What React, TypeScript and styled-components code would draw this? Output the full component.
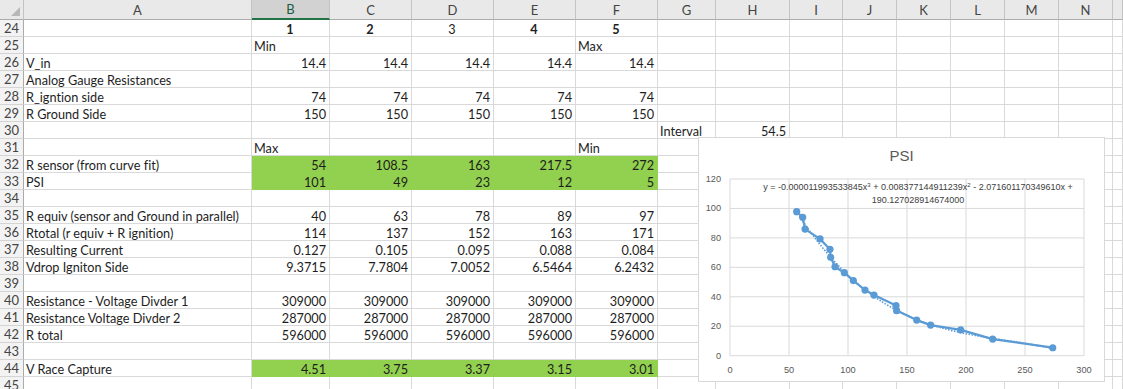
import React from 'react';
import styled, { createGlobalStyle } from 'styled-components';

const GlobalStyle = createGlobalStyle`
  html, body {
    margin: 0;
    padding: 0;
    background: #ffffff;
    overflow: hidden;
  }
`;

const COLS = ['A', 'B', 'C', 'D', 'E', 'F', 'G', 'H', 'I', 'J', 'K', 'L', 'M', 'N', ''];
const WIDTHS = [24, 228, 78, 82, 82, 82, 82, 58, 74, 53, 54, 54, 54, 54, 54];

type Align = 'left' | 'right' | 'center';

interface CellData {
  v: string;
  align?: Align;
  bold?: boolean;
}

interface RowData {
  n: number;
  cells: Record<string, CellData>;
  green?: boolean;
}

const nums = (label: string | null, values: (string | number)[], green = false): Omit<RowData, 'n'> => {
  const cells: Record<string, CellData> = {};
  if (label) cells.A = { v: label, align: 'left' };
  values.forEach((val, i) => {
    cells['BCDEF'[i]] = { v: String(val), align: 'right' };
  });
  return { cells, green };
};

const ROWS: RowData[] = [
  {
    n: 24,
    cells: {
      B: { v: '1', align: 'center', bold: true },
      C: { v: '2', align: 'center', bold: true },
      D: { v: '3', align: 'center' },
      E: { v: '4', align: 'center', bold: true },
      F: { v: '5', align: 'center', bold: true },
    },
  },
  { n: 25, cells: { B: { v: 'Min', align: 'left' }, F: { v: 'Max', align: 'left' } } },
  { n: 26, ...nums('V_in', ['14.4', '14.4', '14.4', '14.4', '14.4']) },
  { n: 27, ...nums('Analog Gauge Resistances', []) },
  { n: 28, ...nums('R_igntion side', [74, 74, 74, 74, 74]) },
  { n: 29, ...nums('R Ground Side', [150, 150, 150, 150, 150]) },
  { n: 30, cells: { G: { v: 'Interval', align: 'left' }, H: { v: '54.5', align: 'right' } } },
  { n: 31, cells: { B: { v: 'Max', align: 'left' }, F: { v: 'Min', align: 'left' } } },
  { n: 32, ...nums('R sensor (from curve fit)', [54, '108.5', 163, '217.5', 272], true) },
  { n: 33, ...nums('PSI', [101, 49, 23, 12, 5], true) },
  { n: 34, cells: {} },
  { n: 35, ...nums('R equiv (sensor and Ground in parallel)', [40, 63, 78, 89, 97]) },
  { n: 36, ...nums('Rtotal (r equiv + R ignition)', [114, 137, 152, 163, 171]) },
  { n: 37, ...nums('Resulting Current', ['0.127', '0.105', '0.095', '0.088', '0.084']) },
  { n: 38, ...nums('Vdrop Igniton Side', ['9.3715', '7.7804', '7.0052', '6.5464', '6.2432']) },
  { n: 39, cells: {} },
  { n: 40, ...nums('Resistance - Voltage Divder 1', [309000, 309000, 309000, 309000, 309000]) },
  { n: 41, ...nums('Resistance Voltage Divder 2', [287000, 287000, 287000, 287000, 287000]) },
  { n: 42, ...nums('R total', [596000, 596000, 596000, 596000, 596000]) },
  { n: 43, cells: {} },
  { n: 44, ...nums('V Race Capture', ['4.51', '3.75', '3.37', '3.15', '3.01'], true) },
  { n: 45, cells: {} },
];

const Sheet = styled.div`
  position: relative;
  display: grid;
  grid-template-columns: ${WIDTHS.map(w => `${w}px`).join(' ')} 1fr;
  grid-auto-rows: 17px;
  grid-template-rows: 20px;
  width: 1123px;
  height: 389px;
  overflow: hidden;
  font-family: Lato, 'Liberation Sans', Arial, sans-serif;
  font-size: 12.7px;
  font-variant-ligatures: none;
  color: #1e1e1e;
`;

const Corner = styled.div`
  position: relative;
  background: #e9e9e9;
  border-right: 1px solid #c3c3c3;
  border-bottom: 1px solid #ababab;

  &::after {
    content: '';
    position: absolute;
    right: 3px;
    bottom: 3px;
    border-left: 9px solid transparent;
    border-bottom: 9px solid #b8b8b8;
  }
`;

const ColHeader = styled.div<{ $selected?: boolean }>`
  display: flex;
  align-items: center;
  justify-content: center;
  background: ${p => (p.$selected ? '#d2d2d2' : '#e9e9e9')};
  color: ${p => (p.$selected ? '#1f5c38' : '#444444')};
  border-right: 1px solid #c3c3c3;
  border-bottom: ${p => (p.$selected ? '2px solid #217346' : '1px solid #ababab')};
  font-size: 13px;
`;

const RowHeader = styled.div`
  display: flex;
  align-items: center;
  justify-content: center;
  background: #f3f3f3;
  color: #444444;
  border-right: 1px solid #ababab;
  border-bottom: 1px solid #d4d4d4;
  font-size: 13px;
`;

const Cell = styled.div<{ $align: Align; $bold?: boolean; $green?: boolean }>`
  display: flex;
  align-items: center;
  justify-content: ${p => (p.$align === 'right' ? 'flex-end' : p.$align === 'center' ? 'center' : 'flex-start')};
  padding: 1px 3px 0 2px;
  background: ${p => (p.$green ? '#92d050' : '#ffffff')};
  border-right: 1px solid ${p => (p.$green ? '#92d050' : '#d9d9d9')};
  border-bottom: 1px solid ${p => (p.$green ? '#92d050' : '#d9d9d9')};
  font-weight: ${p => (p.$bold ? 700 : 400)};
  white-space: nowrap;
  overflow: visible;
  box-sizing: border-box;
  min-width: 0;
`;

const ChartBox = styled.div`
  position: absolute;
  left: 698px;
  top: 137px;
  width: 407px;
  height: 245px;
  box-sizing: border-box;
  background: #ffffff;
  border: 1px solid #d9d9d9;
`;

const ChartSvg = styled.svg`
  display: block;
  font-family: 'Liberation Sans', Arial, sans-serif;
`;

// plot geometry, in chart coordinates
const X0 = 32;
const X1 = 386;
const Y0 = 218.7;
const Y1 = 42;
const px = (x: number) => X0 + (x / 300) * (X1 - X0);
const py = (y: number) => Y0 - (y / 120) * (Y0 - Y1);

const POINTS: [number, number][] = [
  [56.5, 97.8], [61.6, 94], [63.6, 86], [76.3, 79.3], [84.7, 72.3], [85.3, 66.8],
  [89, 60.4], [96.9, 56.4], [104.5, 51], [114.4, 44.6], [122, 41.2], [140.7, 34],
  [141.2, 30.6], [158.2, 24.2], [170, 20.8], [195.5, 17.5], [222.6, 11.3], [273.5, 5.4],
];

const fit = (x: number) =>
  -0.000011993533845 * x ** 3 + 0.008377144911239 * x ** 2 - 2.07160117034961 * x + 190.127028914674;

const PsiChart = () => {
  const trend: string[] = [];
  for (let x = 56; x <= 273; x += 2) trend.push(`${px(x).toFixed(1)},${py(fit(x)).toFixed(1)}`);
  const line = POINTS.map(([x, y]) => `${px(x).toFixed(1)},${py(y).toFixed(1)}`).join(' ');

  return (
    <ChartBox>
      <ChartSvg width={405} height={243} viewBox="1 1 405 243">
        <text x={203.5} y={24} textAnchor="middle" fontSize={15} fill="#595959">PSI</text>

        {[0, 20, 40, 60, 80, 100, 120].map(v => (
          <g key={`y${v}`}>
            <line x1={X0} x2={X1} y1={py(v)} y2={py(v)} stroke="#d9d9d9" strokeWidth={1} />
            <text x={23} y={py(v) + 3} textAnchor="end" fontSize={9.2} fill="#595959">{v}</text>
          </g>
        ))}
        {[0, 50, 100, 150, 200, 250, 300].map(v => (
          <g key={`x${v}`}>
            <line x1={px(v)} x2={px(v)} y1={Y1} y2={Y0} stroke="#d9d9d9" strokeWidth={1} />
            <text x={px(v)} y={235.5} textAnchor="middle" fontSize={9.2} fill="#595959">{v}</text>
          </g>
        ))}

        <text x={220} y={53} textAnchor="middle" fontSize={9} fill="#404040">
          y = -0.000011993533845x<tspan dy={-3.5} fontSize={6}>3</tspan>
          <tspan dy={3.5}> + 0.008377144911239x</tspan>
          <tspan dy={-3.5} fontSize={6}>2</tspan>
          <tspan dy={3.5}> - 2.071601170349610x +</tspan>
        </text>
        <text x={220} y={65.5} textAnchor="middle" fontSize={9} fill="#404040">190.127028914674000</text>

        <polyline points={trend.join(' ')} fill="none" stroke="#5b9bd5" strokeWidth={1.6} strokeDasharray="1.5 1.5" />
        <polyline points={line} fill="none" stroke="#5b9bd5" strokeWidth={2.2} strokeLinejoin="round" />
        {POINTS.map(([x, y], i) => (
          <circle key={i} cx={px(x)} cy={py(y)} r={3.6} fill="#5b9bd5" />
        ))}
      </ChartSvg>
    </ChartBox>
  );
};

export default function App() {
  return (
    <>
      <GlobalStyle />
      <Sheet>
        <Corner />
        {COLS.map((c, i) => (
          <ColHeader key={`h${i}`} $selected={c === 'B'}>{c}</ColHeader>
        ))}
        {ROWS.map(row => (
          <React.Fragment key={row.n}>
            <RowHeader>{row.n}</RowHeader>
            {COLS.map((c, i) => {
              const cell = row.cells[c];
              const green = !!row.green && c !== '' && 'BCDEF'.includes(c);
              return (
                <Cell key={`${row.n}-${i}`} $align={cell?.align ?? 'left'} $bold={cell?.bold} $green={green}>
                  {cell?.v}
                </Cell>
              );
            })}
          </React.Fragment>
        ))}
        <PsiChart />
      </Sheet>
    </>
  );
}
